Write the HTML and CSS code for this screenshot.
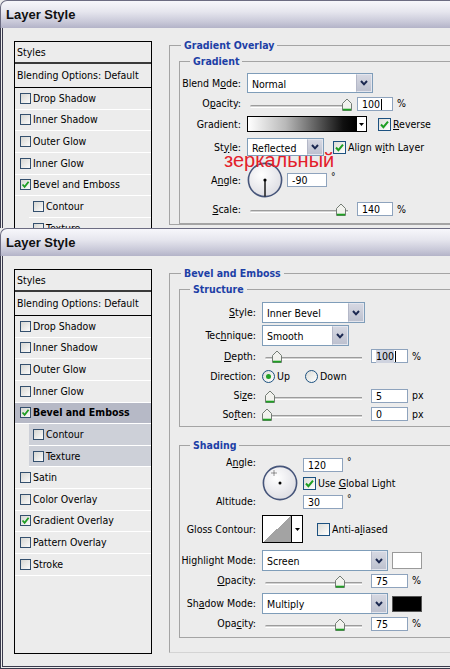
FILE: index.html
```html
<!DOCTYPE html>
<html>
<head>
<meta charset="utf-8">
<title>Layer Style</title>
<link rel="stylesheet" href="styles.css">
</head>
<body>

<div class="dialog d1">
  <div class="titlebar">Layer Style</div>
  <div class="dbody">
    <div class="styles">
      <div class="st-head">Styles</div>
      <div class="st-blend">Blending Options: Default</div>
      <div class="st-row"><span class="cb"></span>Drop Shadow</div>
      <div class="st-row"><span class="cb"></span>Inner Shadow</div>
      <div class="st-row"><span class="cb"></span>Outer Glow</div>
      <div class="st-row"><span class="cb"></span>Inner Glow</div>
      <div class="st-row"><span class="cb"><svg width="9" height="9" viewBox="0 0 9 9"><path d="M1.5 4.5 L3.6 6.8 L7.6 1.8" fill="none" stroke="#1e9e22" stroke-width="1.8"/></svg></span>Bevel and Emboss</div>
      <div class="st-row sub"><span class="cb"></span>Contour</div>
      <div class="st-row sub"><span class="cb"></span>Texture</div>
      <div class="st-row"><span class="cb"></span>Satin</div>
      <div class="st-row"><span class="cb"></span>Color Overlay</div>
      <div class="st-row sel"><span class="cb"><svg width="9" height="9" viewBox="0 0 9 9"><path d="M1.5 4.5 L3.6 6.8 L7.6 1.8" fill="none" stroke="#1e9e22" stroke-width="1.8"/></svg></span>Gradient Overlay</div>
      <div class="st-row"><span class="cb"></span>Pattern Overlay</div>
      <div class="st-row"><span class="cb"></span>Stroke</div>
    </div>

    <div class="settings">
      <fieldset class="grp outer">
        <legend>Gradient Overlay</legend>
        <fieldset class="grp inner g-grad">
          <legend>Gradient</legend>

          <div class="row r-blend">
            <span class="lbl">Blend M<u>o</u>de:</span>
            <div class="select s-blend"><span class="val">Normal</span><span class="arrow"><svg width="8" height="6" viewBox="0 0 8 6"><path d="M1 1 L4 4.3 L7 1" fill="none" stroke="#1b2850" stroke-width="2"/></svg></span></div>
          </div>

          <div class="row r-op1">
            <span class="lbl">O<u>p</u>acity:</span>
            <div class="slider"><span class="track"></span><svg class="thumb" style="left:95px" width="10" height="13" viewBox="0 0 10 13"><path d="M0.5 5.5 L5 1 L9.5 5.5 V12.5 H0.5 Z" fill="#f2f2ee" stroke="#737c74"/><path d="M1 11.6 H9" stroke="#1fa023" stroke-width="1.8"/></svg></div>
            <span class="num">100<span class="caret"></span></span><span class="unit">%</span>
          </div>

          <div class="row r-grad">
            <span class="lbl">Gradient:</span>
            <div class="gradpick"><span class="bar"></span><span class="dd"><svg width="5" height="3" viewBox="0 0 5 3"><path d="M0 0 H5 L2.5 3 Z" fill="#000"/></svg></span></div>
            <span class="fcb m-rev"><svg width="11" height="11" viewBox="0 0 11 11"><path d="M2 5.5 L4.4 8.2 L9 2.6" fill="none" stroke="#1e9e22" stroke-width="2"/></svg></span><span class="chklbl"><u>R</u>everse</span>
          </div>

          <div class="row r-style1">
            <span class="lbl">St<u>y</u>le:</span>
            <div class="select s-style1"><span class="val">Reflected</span><span class="arrow"><svg width="8" height="6" viewBox="0 0 8 6"><path d="M1 1 L4 4.3 L7 1" fill="none" stroke="#1b2850" stroke-width="2"/></svg></span></div>
            <span class="fcb m-align"><svg width="11" height="11" viewBox="0 0 11 11"><path d="M2 5.5 L4.4 8.2 L9 2.6" fill="none" stroke="#1e9e22" stroke-width="2"/></svg></span><span class="chklbl">Align w<u>i</u>th Layer</span>
          </div>

          <div class="row r-angle1">
            <span class="lbl">A<u>n</u>gle:</span>
            <svg class="dial" width="36" height="36" viewBox="0 0 36 36">
              <defs><radialGradient id="dg1" cx="40%" cy="35%" r="70%"><stop offset="0" stop-color="#ffffff"/><stop offset="1" stop-color="#dcdce2"/></radialGradient></defs>
              <circle cx="18" cy="18" r="16.6" fill="url(#dg1)" stroke="#46557a" stroke-width="1.6"/>
              <line x1="18" y1="18" x2="18" y2="34.5" stroke="#1a1a1a" stroke-width="1.5"/>
              <circle cx="18" cy="18" r="1.6" fill="#000"/>
            </svg>
            <span class="num n-angle">-90</span><span class="deg">°</span>
            <span class="note">зеркальный</span>
          </div>

          <div class="row r-scale">
            <span class="lbl"><u>S</u>cale:</span>
            <div class="slider"><span class="track"></span><svg class="thumb" style="left:89px" width="10" height="13" viewBox="0 0 10 13"><path d="M0.5 5.5 L5 1 L9.5 5.5 V12.5 H0.5 Z" fill="#f2f2ee" stroke="#737c74"/><path d="M1 11.6 H9" stroke="#1fa023" stroke-width="1.8"/></svg></div>
            <span class="num">140</span><span class="unit">%</span>
          </div>
        </fieldset>
      </fieldset>
    </div>
  </div>
</div>

<div class="dialog d2">
  <div class="titlebar">Layer Style</div>
  <div class="dbody">
    <div class="styles">
      <div class="st-head">Styles</div>
      <div class="st-blend">Blending Options: Default</div>
      <div class="st-row"><span class="cb"></span>Drop Shadow</div>
      <div class="st-row"><span class="cb"></span>Inner Shadow</div>
      <div class="st-row"><span class="cb"></span>Outer Glow</div>
      <div class="st-row"><span class="cb"></span>Inner Glow</div>
      <div class="st-row sel"><span class="cb"><svg width="9" height="9" viewBox="0 0 9 9"><path d="M1.5 4.5 L3.6 6.8 L7.6 1.8" fill="none" stroke="#1e9e22" stroke-width="1.8"/></svg></span>Bevel and Emboss</div>
      <div class="st-row sub subsel"><span class="cb"></span>Contour</div>
      <div class="st-row sub subsel"><span class="cb"></span>Texture</div>
      <div class="st-row"><span class="cb"></span>Satin</div>
      <div class="st-row"><span class="cb"></span>Color Overlay</div>
      <div class="st-row"><span class="cb"><svg width="9" height="9" viewBox="0 0 9 9"><path d="M1.5 4.5 L3.6 6.8 L7.6 1.8" fill="none" stroke="#1e9e22" stroke-width="1.8"/></svg></span>Gradient Overlay</div>
      <div class="st-row"><span class="cb"></span>Pattern Overlay</div>
      <div class="st-row"><span class="cb"></span>Stroke</div>
    </div>

    <div class="settings">
      <fieldset class="grp outer o-bevel">
        <legend>Bevel and Emboss</legend>
        <fieldset class="grp inner g-struct">
          <legend>Structure</legend>

          <div class="row r-sel">
            <span class="lbl"><u>S</u>tyle:</span>
            <div class="select s-style2"><span class="val">Inner Bevel</span><span class="arrow"><svg width="8" height="6" viewBox="0 0 8 6"><path d="M1 1 L4 4.3 L7 1" fill="none" stroke="#1b2850" stroke-width="2"/></svg></span></div>
          </div>

          <div class="row r-sel">
            <span class="lbl">Tec<u>h</u>nique:</span>
            <div class="select s-tech"><span class="val">Smooth</span><span class="arrow"><svg width="8" height="6" viewBox="0 0 8 6"><path d="M1 1 L4 4.3 L7 1" fill="none" stroke="#1b2850" stroke-width="2"/></svg></span></div>
          </div>

          <div class="row r-depth">
            <span class="lbl"><u>D</u>epth:</span>
            <div class="slider"><span class="track"></span><svg class="thumb" style="left:10px" width="10" height="13" viewBox="0 0 10 13"><path d="M0.5 5.5 L5 1 L9.5 5.5 V12.5 H0.5 Z" fill="#f2f2ee" stroke="#737c74"/><path d="M1 11.6 H9" stroke="#1fa023" stroke-width="1.8"/></svg></div>
            <span class="num"><span class="selected">100</span><span class="caret"></span></span><span class="unit">%</span>
          </div>

          <div class="row r-dir">
            <span class="lbl">Direction:</span>
            <span class="radio"><span class="dot"></span></span><span class="rlbl r-up">Up</span>
            <span class="radio"></span><span class="rlbl">Down</span>
          </div>

          <div class="row r-size">
            <span class="lbl">Si<u>z</u>e:</span>
            <div class="slider"><span class="track"></span><svg class="thumb" style="left:3px" width="10" height="13" viewBox="0 0 10 13"><path d="M0.5 5.5 L5 1 L9.5 5.5 V12.5 H0.5 Z" fill="#f2f2ee" stroke="#737c74"/><path d="M1 11.6 H9" stroke="#1fa023" stroke-width="1.8"/></svg></div>
            <span class="num">5</span><span class="unit">px</span>
          </div>

          <div class="row r-soft">
            <span class="lbl">So<u>f</u>ten:</span>
            <div class="slider"><span class="track"></span><svg class="thumb" style="left:0px" width="10" height="13" viewBox="0 0 10 13"><path d="M0.5 5.5 L5 1 L9.5 5.5 V12.5 H0.5 Z" fill="#f2f2ee" stroke="#737c74"/><path d="M1 11.6 H9" stroke="#1fa023" stroke-width="1.8"/></svg></div>
            <span class="num">0</span><span class="unit">px</span>
          </div>
        </fieldset>

        <fieldset class="grp inner g-shade">
          <legend>Shading</legend>

          <div class="angleblock">
            <div class="ab-labels">
              <span>A<u>n</u>gle:</span>
              <span>Altitude:</span>
            </div>
            <svg class="dial dial2" width="36" height="36" viewBox="0 0 36 36">
              <defs><radialGradient id="dg2" cx="40%" cy="35%" r="70%"><stop offset="0" stop-color="#ffffff"/><stop offset="1" stop-color="#dcdce2"/></radialGradient></defs>
              <circle cx="18" cy="18" r="16.6" fill="url(#dg2)" stroke="#46557a" stroke-width="1.6"/>
              <path d="M12 5.5 V10.5 M9.5 8 H14.5" stroke="#333" stroke-width="1" stroke-dasharray="1 1"/>
              <circle cx="18" cy="18" r="1.5" fill="#000"/>
            </svg>
            <div class="ab-right">
              <div class="ab-line"><span class="num n-angle">120</span><span class="deg">°</span></div>
              <div class="ab-line ab-chk"><span class="fcb"><svg width="11" height="11" viewBox="0 0 11 11"><path d="M2 5.5 L4.4 8.2 L9 2.6" fill="none" stroke="#1e9e22" stroke-width="2"/></svg></span><span class="chklbl">Use <u>G</u>lobal Light</span></div>
              <div class="ab-line ab-alt"><span class="num n-angle">30</span><span class="deg">°</span></div>
            </div>
          </div>

          <div class="row r-gloss">
            <span class="lbl">Gloss Contour:</span>
            <div class="contour"><span class="prev"></span><span class="dd"><svg width="5" height="3" viewBox="0 0 5 3"><path d="M0 0 H5 L2.5 3 Z" fill="#000"/></svg></span></div>
            <span class="fcb m-anti"></span><span class="chklbl">Anti-a<u>l</u>iased</span>
          </div>

          <div class="row r-mode r-hl">
            <span class="lbl">Hi<u>g</u>hlight Mode:</span>
            <div class="select s-mode"><span class="val">Screen</span><span class="arrow"><svg width="8" height="6" viewBox="0 0 8 6"><path d="M1 1 L4 4.3 L7 1" fill="none" stroke="#1b2850" stroke-width="2"/></svg></span></div>
            <span class="swatch sw-white"></span>
          </div>

          <div class="row r-op">
            <span class="lbl"><u>O</u>pacity:</span>
            <div class="slider"><span class="track"></span><svg class="thumb" style="left:73px" width="10" height="13" viewBox="0 0 10 13"><path d="M0.5 5.5 L5 1 L9.5 5.5 V12.5 H0.5 Z" fill="#f2f2ee" stroke="#737c74"/><path d="M1 11.6 H9" stroke="#1fa023" stroke-width="1.8"/></svg></div>
            <span class="num">75</span><span class="unit">%</span>
          </div>

          <div class="row r-mode r-sh">
            <span class="lbl">Sh<u>a</u>dow Mode:</span>
            <div class="select s-mode"><span class="val">Multiply</span><span class="arrow"><svg width="8" height="6" viewBox="0 0 8 6"><path d="M1 1 L4 4.3 L7 1" fill="none" stroke="#1b2850" stroke-width="2"/></svg></span></div>
            <span class="swatch sw-black"></span>
          </div>

          <div class="row r-op">
            <span class="lbl">Opa<u>c</u>ity:</span>
            <div class="slider"><span class="track"></span><svg class="thumb" style="left:73px" width="10" height="13" viewBox="0 0 10 13"><path d="M0.5 5.5 L5 1 L9.5 5.5 V12.5 H0.5 Z" fill="#f2f2ee" stroke="#737c74"/><path d="M1 11.6 H9" stroke="#1fa023" stroke-width="1.8"/></svg></div>
            <span class="num">75</span><span class="unit">%</span>
          </div>
        </fieldset>
      </fieldset>
    </div>
  </div>
</div>

</body>
</html>
```

FILE: styles.css
```css
* { box-sizing: border-box; }
html, body { margin: 0; padding: 0; }
body {
  width: 450px;
  height: 669px;
  overflow: hidden;
  background: #ececec;
  font-family: "DejaVu Sans Condensed", "DejaVu Sans", sans-serif;
  font-stretch: condensed;
  font-size: 10.5px;
  line-height: 13px;
  color: #000;
}
u { text-decoration-thickness: 1px; text-underline-offset: 1px; }

.dialog { width: 640px; overflow: hidden; }
.d1 { height: 228px; }
.d2 { height: 441px; }

.titlebar {
  height: 28px;
  border-top: 1px solid #6c6c82;
  border-left: 1px solid #6c6c82;
  border-top-left-radius: 7px;
  background: linear-gradient(#f7f7fb 0%, #e6e6ee 40%, #c8c8d8 78%, #b3b3c8 100%);
  font: bold 13px/14px "Liberation Sans", Arial, sans-serif;
  padding: 7px 0 0 5px;
  color: #111;
}

.dbody {
  display: flex;
  align-items: flex-start;
  border-left: 3px double #3a3a4c;
  background: #ececec;
}
.d1 .dbody { height: 200px; }
.d2 .dbody { height: 413px; border-bottom: 3px double #3a3a4c; }

/* styles list */
.styles {
  flex: none;
  width: 138px;
  margin: 13px 0 0 11px;
  border: 1px solid #000;
  background: #ececec;
}
.d2 .styles { height: 385px; }
.st-head {
  height: 22px;
  padding: 4px 0 0 2px;
  border-bottom: 2px solid #3a3a3a;
}
.st-blend {
  height: 24px;
  padding: 5px 0 0 2px;
  border-bottom: 1px solid #000;
  white-space: nowrap;
}
.st-row {
  display: flex;
  align-items: center;
  height: 21.64px;
  padding-left: 5px;
  border-bottom: 1px solid #fff;
  white-space: nowrap;
}
.st-row.sub { margin-left: 14px; padding-left: 4px; }
.st-row.sel { background: #b6b9c6; font-weight: bold; }
.st-row.subsel { background: #cdd0d8; }
.cb {
  flex: none;
  width: 11px;
  height: 11px;
  margin-right: 2px;
  border: 1px solid #34506e;
  background: linear-gradient(135deg, #d6d6d2, #fbfbfb);
  display: flex;
  align-items: center;
  justify-content: center;
}

/* settings side */
.settings { flex: 1; padding: 10px 0 0 17px; }
.grp {
  margin: 0;
  min-width: 0;
  border: 1px solid #a4a4a4;
}
.grp legend {
  padding: 0 3px;
  font-weight: bold;
  color: #1d3fa6;
  line-height: 14px;
}
.outer { width: 420px; padding: 2px 0 0 9px; }
.outer > legend { margin-left: 2px; }
.inner { width: 410px; padding: 4px 0 4px 0; }
.inner > legend { margin-left: 10px; }
.o-bevel { padding-bottom: 14px; border-bottom-color: #d4d4d4; }
.g-struct { padding: 5px 0 2px 0; }
.g-shade { margin-top: 11px; padding: 4px 0 5px 0; }

.row { display: flex; align-items: center; position: relative; }
.lbl { flex: none; text-align: right; white-space: nowrap; margin-right: 6px; }
.d1 .lbl { width: 61px; }
.d2 .lbl { width: 76px; }

.r-blend { height: 22px; }
.r-op1 { height: 19px; }
.r-grad { height: 22px; }
.r-style1 { height: 24px; margin-bottom: 2px; }
.r-angle1 { height: 38px; }
.r-scale { height: 20px; }

.r-sel { height: 23px; }
.r-depth { height: 18px; }
.r-dir { height: 22px; }
.r-size { height: 17px; }
.r-soft { height: 20px; }

/* select */
.select {
  flex: none;
  display: flex;
  border: 1px solid #7f9db9;
  background: #fff;
  height: 21px;
}
.select .val { flex: 1; display: flex; align-items: center; padding: 2px 0 0 4px; white-space: nowrap; }
.select .arrow {
  width: 16px;
  flex: none;
  display: flex;
  align-items: center;
  justify-content: center;
  background: linear-gradient(#d6d8e2, #bdc1cf);
  border: 1px solid #e4e6ee;
  border-left-color: #b4b8c8;
}
.s-blend { width: 126px; height: 20px; }
.s-style1 { width: 77px; height: 18px; }
.s-style2 { width: 103px; }
.s-tech { width: 87px; }
.s-mode { width: 126px; }

/* slider */
.slider {
  position: relative;
  flex: none;
  height: 14px;
  padding: 8px 9px 0 3px;
}
.d1 .slider { width: 110px; }
.d2 .slider { width: 109px; }
.track {
  display: block;
  height: 3px;
  border-top: 1px solid #9c9c9c;
  border-bottom: 1px solid #ffffff;
  background: #d2d2d2;
  border-radius: 2px 0 0 2px;
}
.thumb { position: absolute; top: 1px; }

/* numeric input */
.num {
  flex: none;
  display: flex;
  align-items: center;
  height: 14px;
  padding: 1px 0 0 4px;
  border: 1px solid #8ea3bd;
  background: #fff;
  white-space: nowrap;
}
.d1 .num { width: 36px; }
.d2 .num { width: 37px; }
.d1 .n-angle, .d2 .n-angle { width: 40px; }
.caret { display: inline-block; width: 1px; height: 11px; background: #000; margin-left: 1px; }
.selected { background: #cfd3df; }
.unit { margin-left: 4px; }
.deg { margin-left: 4px; margin-bottom: 7px; font-size: 10px; }

/* gradient picker */
.gradpick { flex: none; display: flex; width: 120px; height: 16px; border: 1px solid #000; }
.gradpick .bar { width: 109px; border-right: 1px solid #000; background: linear-gradient(to right, #ffffff 0%, #b8b8b8 35%, #101010 88%, #000 100%); }
.gradpick .dd { flex: 1; display: flex; align-items: center; justify-content: center; background: #fff; }

/* checkboxes, radios */
.fcb {
  flex: none;
  width: 13px;
  height: 13px;
  border: 1px solid #1c5180;
  background: linear-gradient(135deg, #dcdcd7, #ffffff);
  display: flex;
  align-items: center;
  justify-content: center;
}
.chklbl { margin-left: 2px; white-space: nowrap; }
.m-rev { margin-left: 11px; }
.m-align { margin-left: 9px; }
.m-anti { margin-left: 14px; }

.radio {
  flex: none;
  width: 13px;
  height: 13px;
  border-radius: 50%;
  border: 1px solid #1c5180;
  background: linear-gradient(135deg, #dcdcd7, #ffffff);
  display: flex;
  align-items: center;
  justify-content: center;
}
.radio .dot { width: 5px; height: 5px; border-radius: 50%; background: #22a028; }
.rlbl { margin-left: 2px; }
.r-up { width: 28px; }

/* angle dial */
.dial { flex: none; margin-left: 0; }
.r-angle1 .dial { margin-right: 4px; }
.note {
  position: absolute;
  left: 44px;
  top: -11px;
  color: #e3202a;
  font: 20px/20px "Liberation Sans", Arial, sans-serif;
  white-space: nowrap;
}

/* shading angle block */
.angleblock { display: flex; height: 54px; }
.ab-labels {
  flex: none;
  width: 76px;
  margin-right: 6px;
  display: flex;
  flex-direction: column;
  justify-content: space-between;
  align-items: flex-end;
  padding-bottom: 2px;
}
.dial2 { margin-top: 9px; margin-right: 5px; }
.ab-right { display: flex; flex-direction: column; }
.ab-line { display: flex; align-items: center; height: 14px; margin-top: 2px; }
.ab-chk { margin-top: 4px; }
.ab-alt { margin-top: 5px; }

.r-gloss { height: 30px; margin-top: 4px; }
.contour { flex: none; display: flex; width: 41px; height: 28px; border: 1px solid #000; }
.contour .prev { width: 29px; border-right: 1px solid #000; background: linear-gradient(to top left, #a3a3a3 50%, #ffffff 50%); }
.contour .dd { flex: 1; display: flex; align-items: center; justify-content: center; background: #fff; }

.r-mode { height: 23px; }
.r-hl { margin-top: 5px; }
.r-sh { margin-top: 3px; }
.r-op { height: 17px; }
.swatch { flex: none; width: 30px; height: 17px; margin-left: 4px; border: 1px solid #9a9a9a; }
.sw-white { background: #fff; }
.sw-black { background: #000; border-color: #555; height: 16px; }
```
